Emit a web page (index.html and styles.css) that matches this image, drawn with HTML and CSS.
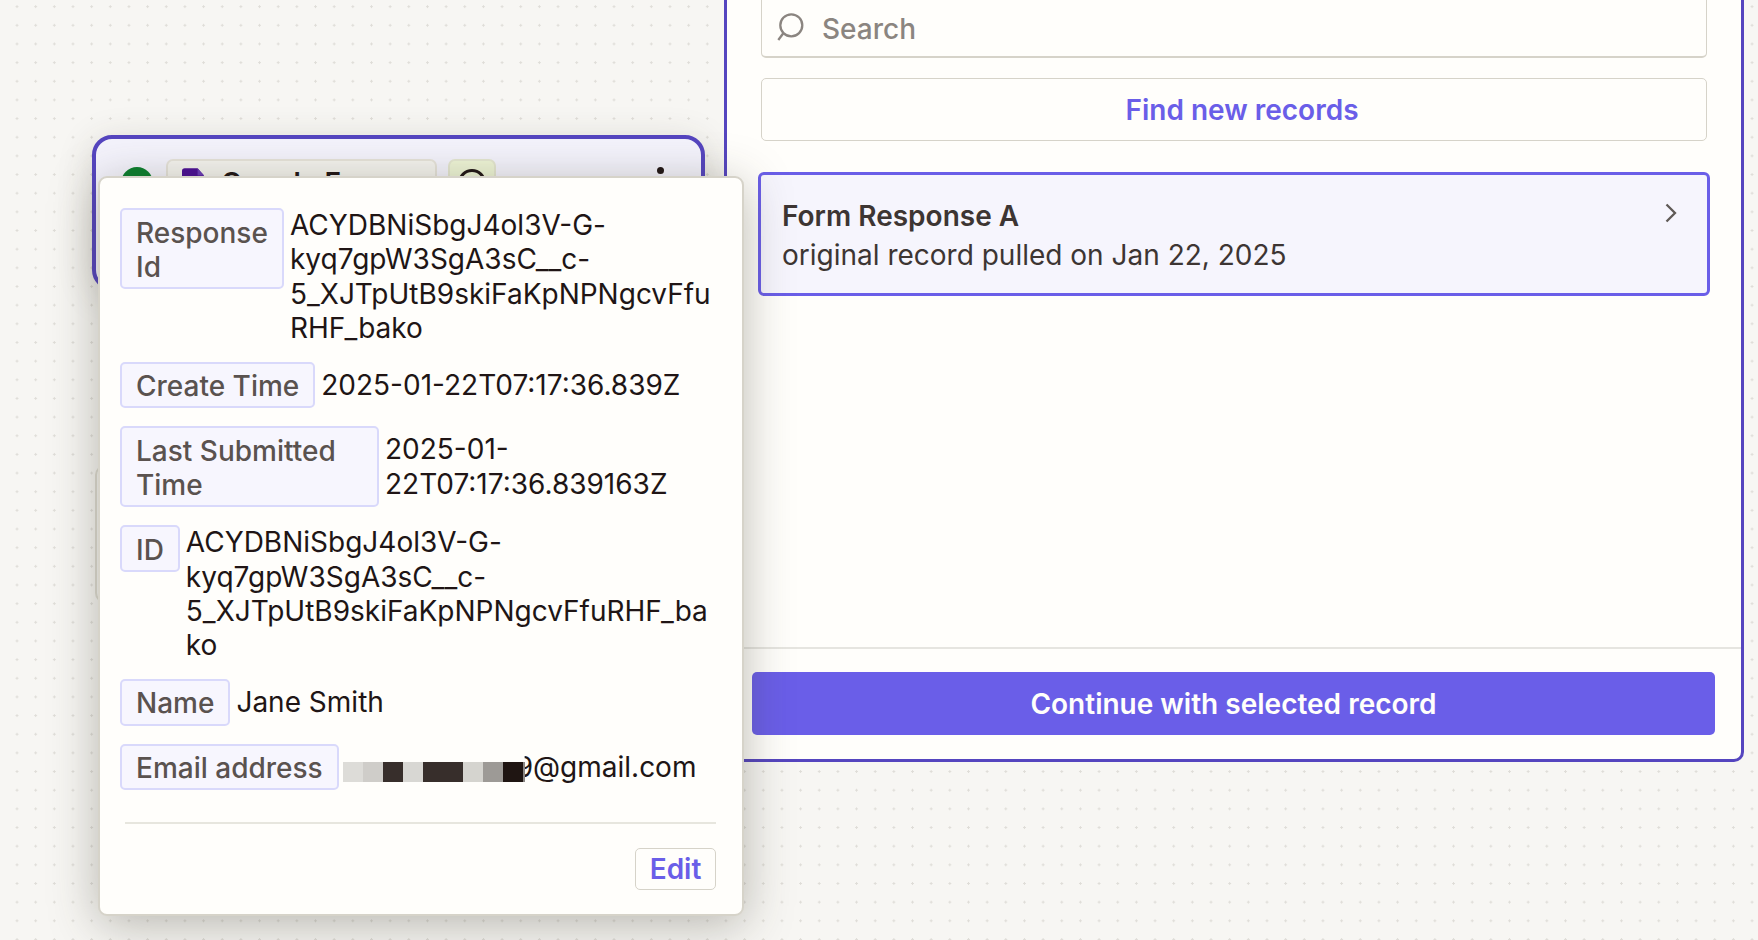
FILE: index.html
```html
<!DOCTYPE html>
<html lang="en">
<head>
<meta charset="utf-8">
<title>Select record</title>
<link rel="stylesheet" href="styles.css">
</head>
<body>
<main class="canvas">
  <div class="ghost-node"></div>
  <section class="node">
    <div class="node-head">
      <span class="status-dot"></span>
      <span class="app-chip">
        <svg class="forms-icon" viewBox="0 0 24 30"><path class="forms-body" d="M3 0h14l7 8v19a3 3 0 0 1-3 3H3a3 3 0 0 1-3-3V3a3 3 0 0 1 3-3z"/><path class="forms-fold" d="M17 0l7 8h-7z"/></svg>
        <span class="app-name">Google Forms</span>
      </span>
      <span class="step-chip"><span class="step-ring"></span></span>
      <span class="kebab"></span>
    </div>
  </section>

  <section class="panel">
    <div class="panel-body">
      <div class="search">
        <svg class="search-icon" viewBox="0 0 30 30"><circle cx="16.3" cy="14.3" r="11"/><path d="M8.3 22.300 3.300 29"/></svg>
        <span class="search-text">Search</span>
      </div>
      <button class="find-btn">Find new records</button>
      <div class="record">
        <div class="record-text">
          <div class="record-title">Form Response A</div>
          <div class="record-sub">original record pulled on Jan 22, 2025</div>
        </div>
        <svg class="chevron" viewBox="0 0 12 20"><path d="M1.5 1.5 10 10l-8.500 8.500"/></svg>
      </div>
    </div>
    <div class="panel-foot">
      <button class="continue-btn">Continue with selected record</button>
    </div>
  </section>

  <aside class="popup">
    <div class="row">
      <span class="label label-wide">Response Id</span>
      <span class="value">ACYDBNiSbgJ4ol3V-G-kyq7gpW3SgA3sC__c-5_XJTpUtB9skiFaKpNPNgcvFfuRHF_bako</span>
    </div>
    <div class="row">
      <span class="label">Create Time</span>
      <span class="value value-mid">2025-01-22T07:17:36.839Z</span>
    </div>
    <div class="row">
      <span class="label label-last">Last Submitted Time</span>
      <span class="value value-mid">2025-01-22T07:17:36.839163Z</span>
    </div>
    <div class="row">
      <span class="label">ID</span>
      <span class="value">ACYDBNiSbgJ4ol3V-G-kyq7gpW3SgA3sC__c-5_XJTpUtB9skiFaKpNPNgcvFfuRHF_bako</span>
    </div>
    <div class="row">
      <span class="label">Name</span>
      <span class="value value-mid">Jane Smith</span>
    </div>
    <div class="row row-last">
      <span class="label">Email address</span>
      <span class="value value-mid"><span class="mosaic"><i class="m1"></i><i class="m2"></i><i class="m3"></i><i class="m4"></i><i class="m3"></i><i class="m3"></i><i class="m5"></i><i class="m6"></i><i class="m7"></i><i class="m8"></i></span><span class="email-tail">9</span>@gmail.com</span>
    </div>
    <div class="popup-foot">
      <button class="edit-btn">Edit</button>
    </div>
  </aside>
</main>
</body>
</html>
```

FILE: styles.css
```css
* { box-sizing: border-box; }
html, body { margin: 0; padding: 0; height: 100%; overflow: hidden; }
body { font-family: Inter, "Noto Sans", sans-serif; color: #201515; }
button { font: inherit; cursor: pointer; }

.canvas {
  position: relative;
  width: 1758px;
  height: 940px;
  overflow: hidden;
  background-color: #f7f6f3;
  background-image: radial-gradient(circle at center, #dfddd8 1.1px, transparent 1.3px);
  background-size: 18.67px 18.67px;
  background-position: 7.7px -2.7px;
}

.ghost-node {
  position: absolute;
  left: 95px;
  top: 465px;
  width: 300px;
  height: 138px;
  border: 2px solid #dedcd2;
  border-radius: 10px;
  background: #f7f6f3;
}

.node {
  position: absolute;
  left: 92px;
  top: 135px;
  width: 613px;
  height: 155px;
  border: 4px solid #5545bf;
  border-radius: 20px;
  background: #f4f3fc;
  box-shadow: 0 6px 36px rgba(60, 55, 40, .16);
}
.node-head {
  display: flex;
  align-items: flex-start;
  padding: 20px 37px 0 25px;
}
.status-dot {
  flex: none;
  width: 32px;
  height: 32px;
  margin-top: 8px;
  border-radius: 50%;
  background: #0b7f2e;
}
.app-chip {
  flex: none;
  display: flex;
  align-items: flex-start;
  gap: 17px;
  width: 271px;
  height: 44px;
  margin-left: 13px;
  padding: 7px 0 0 14px;
  border: 2px solid #e6e3da;
  border-radius: 7px;
  background: #f5f4ef;
}
.forms-icon { flex: none; width: 22px; height: 28px; }
.forms-body { fill: #4a0e95; }
.forms-fold { fill: #6a3bb8; }
.app-name { font-size: 28px; font-weight: 600; line-height: 30px; white-space: nowrap; }
.step-chip {
  flex: none;
  width: 48px;
  height: 44px;
  margin-left: 11px;
  padding: 8px 0 0 8px;
  border: 2px solid #e4e6d0;
  border-radius: 7px;
  background: #eef5d6;
}
.step-ring {
  display: block;
  width: 28px;
  height: 28px;
  border: 3px solid #201515;
  border-radius: 50%;
}
.kebab {
  flex: none;
  width: 7px;
  height: 7px;
  margin: 7.500px 0 0 auto;
  border-radius: 50%;
  background: #201515;
}

.panel {
  position: absolute;
  left: 724px;
  top: -40px;
  width: 1020px;
  height: 802px;
  display: flex;
  flex-direction: column;
  border: 3px solid #5545bf;
  border-radius: 10px;
  background: #fffefb;
}
.panel-body {
  flex: 1;
  padding: 32px 34px 0;
}
.search {
  display: flex;
  align-items: center;
  height: 63px;
  padding: 6px 0 0 13px;
  border: 1px solid #d6d3c9;
  border-bottom-width: 2px;
  border-radius: 5px;
  background: #fffefb;
}
.search-icon { flex: none; width: 30px; height: 30px; margin-top: -6px; fill: none; stroke: #8b8580; stroke-width: 2.300; }
.search-text { margin-left: 17px; font-size: 28px; font-weight: 500; color: #8b8580; }
.find-btn {
  display: block;
  width: 100%;
  height: 63px;
  margin-top: 20px;
  padding: 0 0 0 16px;
  border: 1px solid #d6d3c9;
  border-radius: 5px;
  background: #fffefb;
  color: #6a5ee8;
  font-size: 28px;
  font-weight: 600;
}
.record {
  display: flex;
  justify-content: space-between;
  align-items: flex-start;
  height: 124px;
  margin: 31px -3px 0;
  padding: 22px 30px 0 21px;
  border: 3px solid #6a5ee8;
  border-radius: 6px;
  background: #f6f5fd;
}
.record-title { font-size: 28px; font-weight: 600; line-height: 39px; color: #3d3533; }
.record-sub { font-size: 28px; line-height: 39px; color: #3d3533; }
.chevron { flex: none; width: 12px; height: 20px; margin-top: 6px; fill: none; stroke: #5f5956; stroke-width: 2.300; }
.panel-foot {
  flex: none;
  height: 112px;
  padding: 23px 26px 0 25px;
  border-top: 2px solid #e6e5e0;
}
.continue-btn {
  display: block;
  width: 100%;
  height: 63px;
  border: 0;
  border-radius: 5px;
  background: #6a5ee8;
  color: #fffefb;
  font-size: 28px;
  font-weight: 600;
}

.popup {
  position: absolute;
  left: 98px;
  top: 176px;
  width: 646px;
  height: 740px;
  padding: 30px 26px 0 20px;
  border: 2px solid #d6d3c9;
  border-radius: 9px;
  background: #fffefb;
  box-shadow: 0 8px 48px rgba(60, 55, 40, .34);
}
.row {
  display: flex;
  align-items: flex-start;
  gap: 6px;
  margin-bottom: 16px;
}
.row-last { margin-bottom: 0; }
.label {
  flex: none;
  margin-bottom: 2px;
  padding: 5.500px 14px 3.300px;
  border: 2px solid #d9d9fb;
  border-radius: 5px;
  background: #f7f6fe;
  color: #5a524f;
  font-size: 28px;
  font-weight: 500;
  line-height: 34px;
}
.label-wide { width: 164px; }
.label-last { width: 259px; }
.value {
  min-width: 0;
  font-size: 28px;
  line-height: 34.4px;
  color: #201515;
  overflow-wrap: anywhere;
}
.value-mid { align-self: center; margin-bottom: 2px; }
.mosaic {
  position: relative;
  z-index: 1;
  display: inline-flex;
  vertical-align: -5px;
  margin: 0 -9px 0 -2px;
}
.mosaic i { display: block; width: 20px; height: 20px; }
.mosaic .m1 { background: #dddcd8; }
.mosaic .m2 { background: #cfcdc9; }
.mosaic .m3 { background: #372e2b; }
.mosaic .m4 { background: #d8d7d3; }
.mosaic .m5 { background: #d5d4cf; }
.mosaic .m6 { background: #9d9a96; }
.mosaic .m7 { background: #1f1512; }
.mosaic .m8 { width: 2px; background: #8a8683; }
.email-tail { display: inline-block; clip-path: inset(0 0 0 9px); }
.popup-foot {
  display: flex;
  justify-content: flex-end;
  margin: 30px 0 0 5px;
  padding-top: 24px;
  border-top: 2px solid #e7e6de;
}
.edit-btn {
  height: 42px;
  width: 81px;
  padding: 0;
  border: 1px solid #d6d3c9;
  border-radius: 5px;
  background: #fffefb;
  color: #6a5ee8;
  font-size: 28px;
  font-weight: 600;
}
```
